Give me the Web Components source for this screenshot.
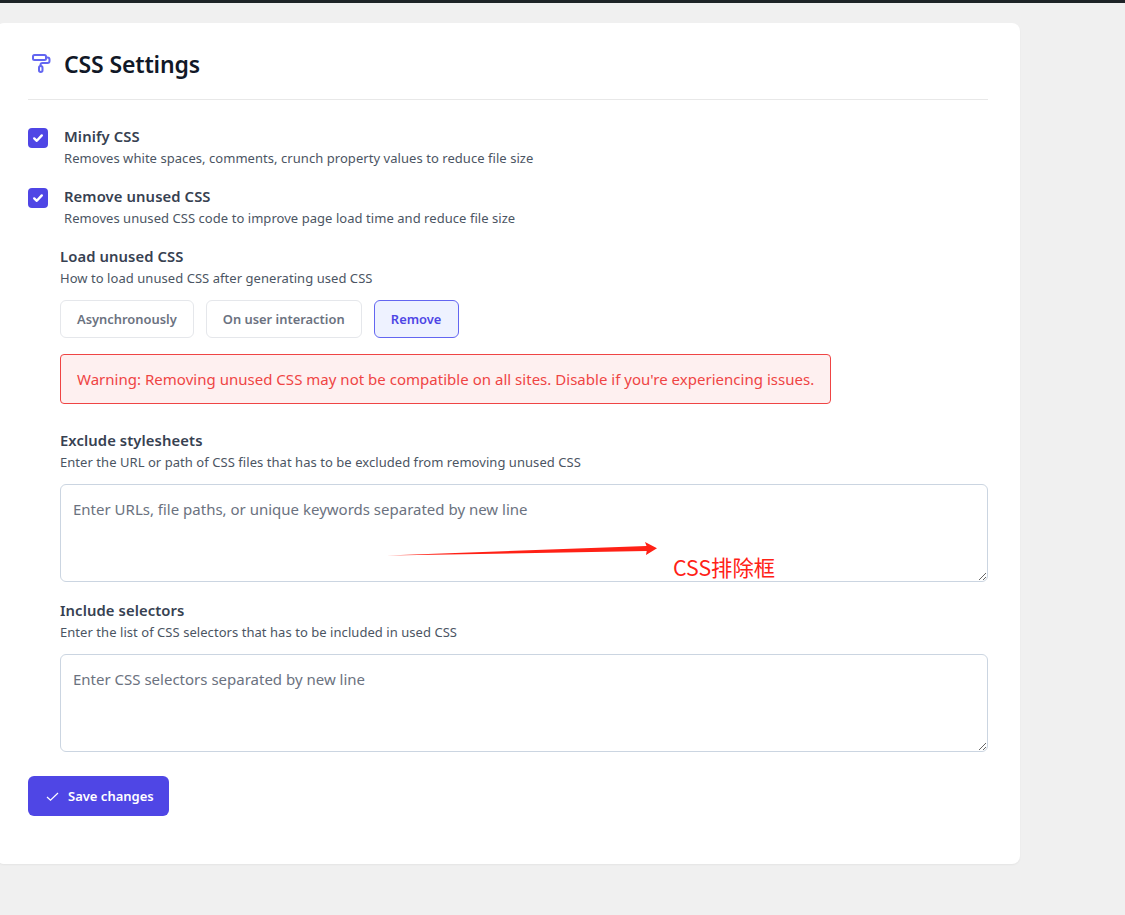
<!DOCTYPE html>
<html lang="en">
<head>
<meta charset="utf-8">
<title>CSS Settings</title>
<style>
  html, body { margin: 0; padding: 0; }
  body {
    background: #f0f0f0;
    font-family: "Noto Sans", "Noto Sans CJK SC", sans-serif;
    border-top: 3px solid #1d2327;
    height: 912px;
    overflow: hidden;
  }
  setting-area + setting-area { margin-top: 18px; }
</style>
</head>
<body>
<settings-card heading="CSS Settings">
  <setting-toggle label="Minify CSS" desc="Removes white spaces, comments, crunch property values to reduce file size"></setting-toggle>
  <setting-toggle label="Remove unused CSS" desc="Removes unused CSS code to improve page load time and reduce file size"></setting-toggle>
  <setting-group label="Load unused CSS" desc="How to load unused CSS after generating used CSS">
    <option-buttons>
      <option-button>Asynchronously</option-button>
      <option-button>On user interaction</option-button>
      <option-button active>Remove</option-button>
    </option-buttons>
    <warning-box>Warning: Removing unused CSS may not be compatible on all sites. Disable if you're experiencing issues.</warning-box>
  </setting-group>
  <setting-area label="Exclude stylesheets" desc="Enter the URL or path of CSS files that has to be excluded from removing unused CSS" placeholder="Enter URLs, file paths, or unique keywords separated by new line">
    <red-note>CSS排除框</red-note>
  </setting-area>
  <setting-area label="Include selectors" desc="Enter the list of CSS selectors that has to be included in used CSS" placeholder="Enter CSS selectors separated by new line"></setting-area>
  <save-button>Save changes</save-button>
</settings-card>

<script>
  const labelCss = `
    .label { font-size: 14.8px; line-height: 20px; font-weight: 600; color: #374151; letter-spacing: .1px; }
    .desc { font-size: 13px; line-height: 16px; font-weight: 400; color: #4b5563; margin-top: 4px; letter-spacing: .05px; }
  `;

  class SettingsCard extends HTMLElement {
    constructor() {
      super();
      this.attachShadow({ mode: "open" }).innerHTML = `
        <style>
          :host { display: block; box-sizing: border-box; width: 1024px; margin: 20px 0 0 -4px; padding: 24px 32px 48px; background: #fff; border-radius: 8px; box-shadow: 0 1px 2px rgba(0,0,0,.05); }
          header { display: flex; align-items: center; gap: 12px; height: 34px; padding-bottom: 18px; border-bottom: 1px solid #e8e8e8; }
          svg { width: 24px; height: 24px; flex: none; fill: none; stroke: #6366f1; stroke-width: 2; }
          h1 { margin: 0; font-size: 23px; line-height: 34px; font-weight: 600; letter-spacing: -.14px; color: #111827; }
          .body { display: flex; flex-direction: column; padding-top: 28px; }
        </style>
        <header>
          <svg viewBox="0 0 24 24"><rect x="5" y="3" width="13" height="5" rx="1.5"/><path d="M18 5.5h1.5a2 2 0 0 1 2 2v1.5a2 2 0 0 1-2 2h-5a2 2 0 0 0-2 2v1"/><rect x="11" y="14" width="3.5" height="6" rx="1.75"/></svg>
          <h1></h1>
        </header>
        <div class="body"><slot></slot></div>
      `;
      this.shadowRoot.querySelector("h1").textContent = this.getAttribute("heading");
    }
  }

  class SettingToggle extends HTMLElement {
    constructor() {
      super();
      this.attachShadow({ mode: "open" }).innerHTML = `
        <style>
          :host { display: flex; gap: 16px; height: 60px; }
          .box { width: 20px; height: 20px; border-radius: 4px; background: #4f46e5; flex: none; display: flex; align-items: center; justify-content: center; }
          .box svg { width: 12px; height: 12px; fill: none; stroke: #fff; stroke-width: 2.4; stroke-linecap: round; stroke-linejoin: round; }
          .text { margin-top: -2px; }
          ${labelCss}
        </style>
        <span class="box"><svg viewBox="0 0 12 12"><path d="M2.2 6.4 4.8 8.8 9.8 3.4"/></svg></span>
        <div class="text"><div class="label"></div><div class="desc"></div></div>
      `;
      this.shadowRoot.querySelector(".label").textContent = this.getAttribute("label");
      this.shadowRoot.querySelector(".desc").textContent = this.getAttribute("desc");
    }
  }

  class SettingGroup extends HTMLElement {
    constructor() {
      super();
      this.attachShadow({ mode: "open" }).innerHTML = `
        <style>
          :host { display: block; margin: -2px 0 0 32px; }
          ${labelCss}
        </style>
        <div class="label"></div><div class="desc"></div>
        <slot></slot>
      `;
      this.shadowRoot.querySelector(".label").textContent = this.getAttribute("label");
      this.shadowRoot.querySelector(".desc").textContent = this.getAttribute("desc");
    }
  }

  class OptionButtons extends HTMLElement {
    constructor() {
      super();
      this.attachShadow({ mode: "open" }).innerHTML = `
        <style>:host { display: flex; gap: 12px; margin-top: 14px; }</style>
        <slot></slot>
      `;
    }
  }

  class OptionButton extends HTMLElement {
    constructor() {
      super();
      this.attachShadow({ mode: "open" }).innerHTML = `
        <style>
          :host { display: block; box-sizing: border-box; height: 38px; padding: 0 16px; border: 1px solid #e5e7eb; border-radius: 6px; background: #fff; color: #6b7280; font-size: 12.9px; line-height: 36px; font-weight: 600; }
          :host([active]) { background: #eef2ff; border-color: #6366f1; color: #4f46e5; min-width: 85px; text-align: center; }
        </style>
        <slot></slot>
      `;
    }
  }

  class WarningBox extends HTMLElement {
    constructor() {
      super();
      this.attachShadow({ mode: "open" }).innerHTML = `
        <style>
          :host { display: block; box-sizing: border-box; width: fit-content; height: 50px; margin-top: 16px; padding: 0 16px; border: 1px solid #ef4444; border-radius: 4px; background: #fef0f0; color: #ef4444; font-size: 15px; line-height: 48px; letter-spacing: .02px; }
        </style>
        <slot></slot>
      `;
    }
  }

  class SettingArea extends HTMLElement {
    constructor() {
      super();
      this.attachShadow({ mode: "open" }).innerHTML = `
        <style>
          :host { display: block; position: relative; margin: 26px 0 0 32px; }
          .wrap { position: relative; margin-top: 14px; height: 98px; }
          textarea { display: block; box-sizing: border-box; width: 100%; height: 98px; padding: 12px; border: 1px solid #cbd5e1; border-radius: 6px; background: #fff; font: 400 15px/24px "Noto Sans", sans-serif; color: #374151; outline: none; }
          textarea::placeholder { color: #6b7280; opacity: 1; }
          ${labelCss}
        </style>
        <div class="label"></div><div class="desc"></div>
        <div class="wrap"><textarea></textarea><slot></slot></div>
      `;
      this.shadowRoot.querySelector(".label").textContent = this.getAttribute("label");
      this.shadowRoot.querySelector(".desc").textContent = this.getAttribute("desc");
      this.shadowRoot.querySelector("textarea").placeholder = this.getAttribute("placeholder");
    }
  }

  // hand-drawn annotation over the textarea
  class RedNote extends HTMLElement {
    constructor() {
      super();
      this.attachShadow({ mode: "open" }).innerHTML = `
        <style>
          :host { display: block; position: absolute; left: 0; top: 0; width: 100%; height: 100%; pointer-events: none; }
          svg { position: absolute; left: 320px; top: 54px; width: 280px; height: 20px; }
          span { position: absolute; left: 613px; top: 68px; font: 400 21.3px/30px "Noto Sans CJK SC", sans-serif; color: #ff2116; white-space: nowrap; }
        </style>
        <svg viewBox="380 538 280 20"><polygon fill="#ff2116" points="387,555.4 646.5,546 645,542 657,548.3 646,555 646.7,551 387,555.6"/></svg>
        <span><slot></slot></span>
      `;
    }
  }

  class SaveButton extends HTMLElement {
    constructor() {
      super();
      this.attachShadow({ mode: "open" }).innerHTML = `
        <style>
          :host { display: flex; align-items: center; gap: 8px; box-sizing: border-box; width: fit-content; height: 40px; margin-top: 24px; padding: 0 15px 0 17px; border-radius: 6px; background: #4f46e5; color: #fff; font-size: 13px; font-weight: 600; }
          svg { width: 15px; height: 15px; fill: none; stroke: #fff; stroke-width: 1.2; }
        </style>
        <svg viewBox="0 0 15 15"><path d="M2 8l3.5 3.2L13 4"/></svg>
        <slot></slot>
      `;
    }
  }

  customElements.define("settings-card", SettingsCard);
  customElements.define("setting-toggle", SettingToggle);
  customElements.define("setting-group", SettingGroup);
  customElements.define("option-buttons", OptionButtons);
  customElements.define("option-button", OptionButton);
  customElements.define("warning-box", WarningBox);
  customElements.define("setting-area", SettingArea);
  customElements.define("red-note", RedNote);
  customElements.define("save-button", SaveButton);
</script>
</body>
</html>
